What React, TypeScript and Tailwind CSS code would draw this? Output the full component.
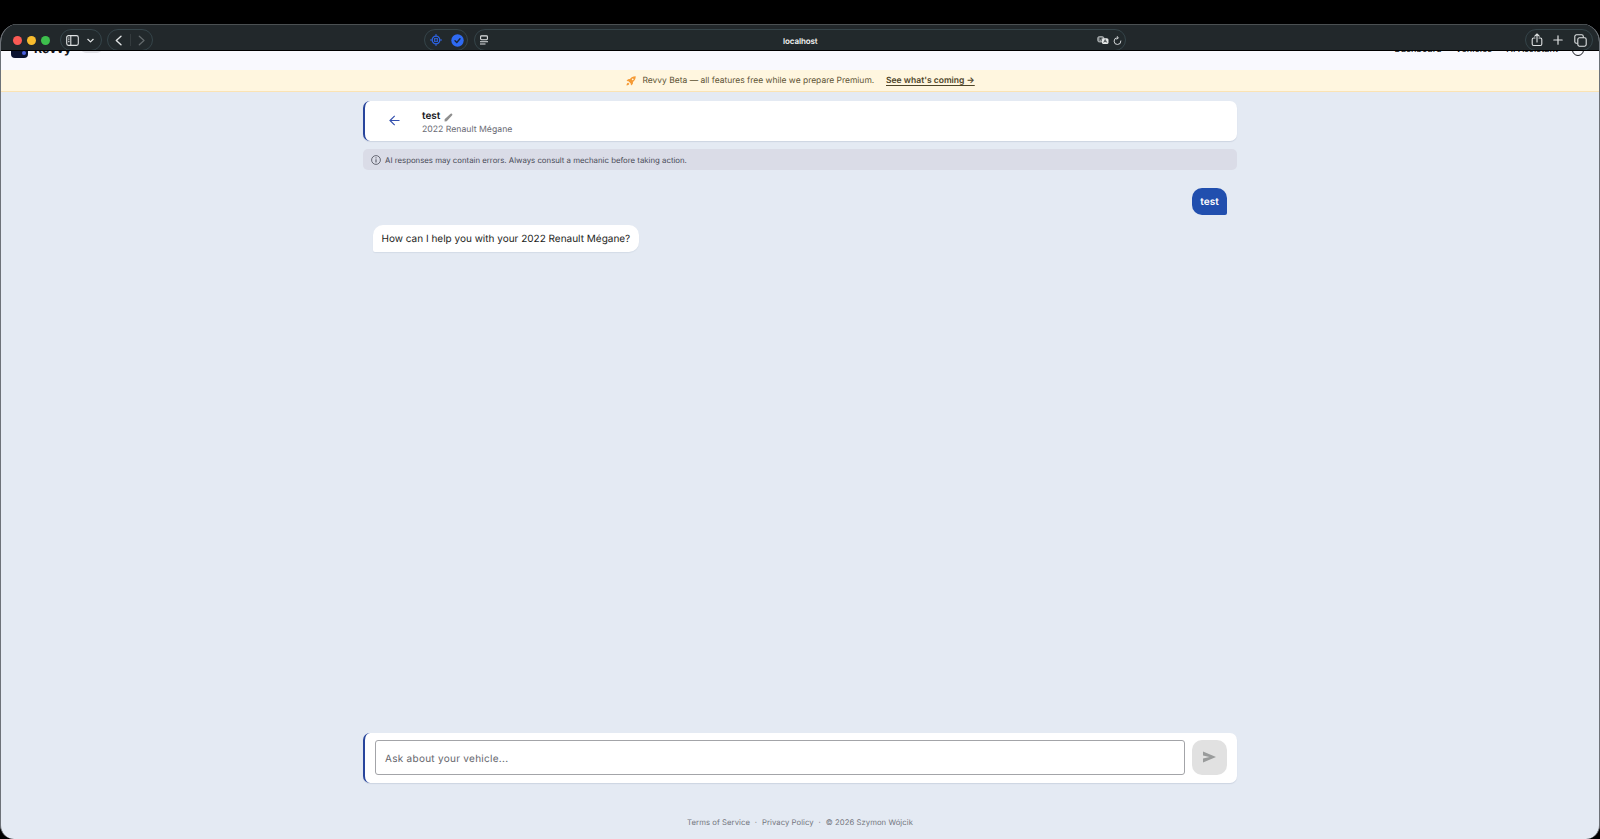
import type { ReactNode } from "react";

const pill =
  "flex h-[22px] shrink-0 items-center rounded-full border border-[#36454a] bg-[#22292c]";

function Toolbar() {
  return (
    <header className="relative flex h-[27px] shrink-0 items-start overflow-hidden border-t border-b border-t-[#4b5052] border-b-black bg-[#22282b] pt-1 text-[#dfe2e3]">
      <div className="mt-[6.5px] ml-[11.5px] flex gap-[5.4px]">
        <span className="size-[9px] rounded-full bg-[#fb5a54]" />
        <span className="size-[9px] rounded-full bg-[#f8bc2e]" />
        <span className="size-[9px] rounded-full bg-[#3dbf4c]" />
      </div>
      <div className={`${pill} ml-[10px] w-[42px] gap-[8px] pl-[5px]`}>
        <svg className="size-[13px]" viewBox="0 0 13 13" fill="none" stroke="currentColor" strokeWidth="1.1">
          <rect x="0.7" y="1.6" width="11.6" height="9.8" rx="1.8" />
          <path d="M4.8 1.6v9.8M2.2 4h1.2M2.2 5.8h1.2M2.2 7.6h1.2" />
        </svg>
        <svg className="size-[7px]" viewBox="0 0 7 7" fill="none" stroke="currentColor" strokeWidth="1.2" strokeLinecap="round" strokeLinejoin="round">
          <path d="M0.8 2.3 3.5 4.9 6.2 2.3" />
        </svg>
      </div>
      <div className={`${pill} ml-[5px] w-[46px] pl-[6px]`}>
        <svg className="h-[11px] w-[9px]" viewBox="0 0 9 11" fill="none" stroke="currentColor" strokeWidth="1.4" strokeLinecap="round" strokeLinejoin="round">
          <path d="M7 1.3 2.3 5.5 7 9.7" />
        </svg>
        <span className="ml-[7px] h-[12px] w-px bg-[#343b3e]" />
        <svg className="ml-[6px] h-[11px] w-[9px] text-[#62686b]" viewBox="0 0 9 11" fill="none" stroke="currentColor" strokeWidth="1.3" strokeLinecap="round" strokeLinejoin="round">
          <path d="M2.3 1.3 7 5.5 2.3 9.7" />
        </svg>
      </div>
      <div className={`${pill} ml-[271px] w-[44px] gap-[9px] pl-[5px]`}>
        <svg className="size-[12px] text-[#2d62e0]" viewBox="0 0 12 12" fill="none" stroke="currentColor">
          <circle cx="6" cy="6" r="3.8" strokeWidth="1.3" />
          <circle cx="6" cy="6" r="1.5" strokeWidth="1.1" />
          <path d="M6 0v3M6 9v3M0 6h3M9 6h3M3.4 3.4l1.4 1.4M7.2 7.2l1.4 1.4M8.6 3.4 7.2 4.8M4.8 7.2 3.4 8.6" strokeWidth="1" />
        </svg>
        <svg className="size-[13px]" viewBox="0 0 13 13">
          <circle cx="6.5" cy="6.5" r="6.2" fill="#2f6af2" />
          <path d="M4 6.7 5.8 8.5 9 4.8" fill="none" stroke="#182434" strokeWidth="1.4" strokeLinecap="round" />
        </svg>
      </div>
      <div className={`${pill} ml-[6px] w-[652px] pl-[4px]`}>
        <svg className="size-[10px]" viewBox="0 0 10 10" fill="none" stroke="currentColor" strokeWidth="1.1">
          <rect x="1.6" y="0.9" width="6.8" height="3.8" rx="0.9" />
          <path d="M1 6.8h8M1 9h5.5" />
        </svg>
        <span className="w-[622px] pt-px text-center text-[8px] leading-[10px] font-semibold tracking-[-0.08px] text-[#f1f2f2]">
          localhost
        </span>
      </div>
      <div className="absolute top-[10.5px] left-[1096px] flex items-center gap-[4px]">
        <svg className="h-[9px] w-[12px]" viewBox="0 0 12 9">
          <rect x="0.7" y="0.6" width="6.2" height="5.4" rx="1.6" fill="#8f9496" stroke="#b5b9ba" strokeWidth="0.8" />
          <path d="M2.2 2.2h3M3.7 1.8 2.5 4.6M3.4 3l1.6 1.5" stroke="#22292c" strokeWidth="0.7" />
          <rect x="5" y="2.2" width="6.5" height="5.8" rx="1.6" fill="#e6e8e8" />
          <path d="M6.7 6.5 8.2 3.6 9.7 6.5M7.3 5.6h1.8" fill="none" stroke="#22292c" strokeWidth="0.7" />
        </svg>
        <svg className="size-[9px]" viewBox="0 0 9 9" fill="none" stroke="#d5d8d9" strokeWidth="1" strokeLinecap="round" strokeLinejoin="round">
          <path d="M4.5 1.7A3.4 3.4 0 1 0 7.9 5M4 .4 5.4 1.7 4 3.2" />
        </svg>
      </div>
      <div className={`${pill} mr-[6px] ml-auto w-[68px] justify-between pr-[5px] pl-[4.5px]`}>
        <svg className="h-[14px] w-[12px]" viewBox="0 0 12 14" fill="none" stroke="currentColor" strokeWidth="1.1" strokeLinecap="round" strokeLinejoin="round">
          <path d="M4 5H2.6A1.4 1.4 0 0 0 1.2 6.4v4.7a1.4 1.4 0 0 0 1.4 1.4h6.8a1.4 1.4 0 0 0 1.4-1.4V6.4A1.4 1.4 0 0 0 9.4 5H8M6 9V1.2M3.8 3.2 6 1l2.2 2.2" />
        </svg>
        <svg className="size-[10px]" viewBox="0 0 10 10" stroke="currentColor" strokeWidth="1.2" strokeLinecap="round">
          <path d="M5 .8v8.4M.8 5h8.4" />
        </svg>
        <svg className="size-[13px]" viewBox="0 0 13 13" fill="none" stroke="currentColor" strokeWidth="1.1">
          <path d="M3.6 9.3H2.4A1.6 1.6 0 0 1 .8 7.7V2.4A1.6 1.6 0 0 1 2.4.8h5.3a1.6 1.6 0 0 1 1.6 1.6v1.2" />
          <rect x="3.8" y="3.8" width="8.4" height="8.4" rx="1.6" />
        </svg>
      </div>
    </header>
  );
}

function NavBar() {
  return (
    <nav className="flex h-[19px] shrink-0 items-start overflow-hidden bg-[#f9f9fe] pr-[15.5px] pl-[10px]">
      <div className="-mt-[10px] flex size-[17px] items-end justify-end rounded-[4px] bg-[#0b1230] pr-[2px] pb-[3px]">
        <span className="size-[4px] rounded-full bg-[#4a60e0]" />
      </div>
      <span className="-mt-[10px] ml-[6px] w-[36px] text-[12.4px] leading-[16px] font-bold text-[#14161c]">Revvy</span>
      <span className="-mt-[10px] ml-[11px] h-[12px] w-[21px] rounded-[5px] bg-[#e0e0e6]" />
      <div className="-mt-[7px] ml-auto flex text-[8.9px] leading-[12px] font-medium tracking-[0.1px] text-[#1c1e24]">
        <span className="w-[61px]">Dashboard</span>
        <span className="w-[51px]">Vehicles</span>
        <span className="w-[65px]">AI Assistant</span>
      </div>
      <span className="-mt-[7px] size-[12px] rounded-full border-[1.4px] border-[#1c1e24]" />
    </nav>
  );
}

function Banner() {
  return (
    <div className="flex h-[22px] shrink-0 items-center border-b border-[#fae3b4] bg-[#fff6df] pl-[625px] text-[8.48px] leading-[12px] whitespace-nowrap text-[#5d5334]">
      <svg className="size-[10px]" viewBox="0 0 10 10">
        <path d="M9.7.3C7.2.2 5.3 1.2 4 3L2 3.2.5 5l2 .3 2.2 2.2.3 2L6.8 8 7 6C8.8 4.7 9.8 2.8 9.7.3Z" fill="#f59a35" />
        <circle cx="6.7" cy="3.3" r=".9" fill="#fff6df" />
        <path d="M.5 9.5C.6 8 1 7 2.2 6.7L3.3 7.8C3 9 2 9.4.5 9.5Z" fill="#f59a35" />
      </svg>
      <span className="ml-[6.5px] w-[243.5px]">Revvy Beta — all features free while we prepare Premium.</span>
      <a className="text-[8.55px] font-semibold text-[#4d4428] underline underline-offset-[1.5px]">See what's coming →</a>
    </div>
  );
}

function Card({ className, children }: { className: string; children: ReactNode }) {
  return (
    <section className={`flex shrink-0 rounded-[7px] border-l-2 border-[#28459c] bg-white shadow-[0_1px_1px_rgba(40,60,100,0.12)] ${className}`}>
      {children}
    </section>
  );
}

function ChatHeader() {
  return (
    <Card className="mt-[9px] h-[40px]">
      <svg className="mt-[14px] ml-[24px] size-[11px]" viewBox="0 0 11 11" fill="none" stroke="#3450ae" strokeWidth="1.2">
        <path d="M10.5 5.5H1.2M5.7.8 1 5.5l4.7 4.7" />
      </svg>
      <div className="ml-[22px] pt-[9px]">
        <div className="flex h-[12px] items-center text-[10px] leading-[12px] font-semibold text-[#15161a]">
          <span>test</span>
          <svg className="mt-[2px] ml-[4px] size-[9px]" viewBox="0 0 9 9" fill="#8f8f8f">
            <path d="M.6 8.5V6.2L6.6.8Q7.3.2 8 .8t.2 1.5L2.7 8.2Z" />
          </svg>
        </div>
        <p className="mt-[2px] text-[8.7px] leading-[12px] text-[#6b6c75]">2022 Renault Mégane</p>
      </div>
    </Card>
  );
}

function Disclaimer() {
  return (
    <div className="mt-[8px] flex h-[21px] shrink-0 items-center rounded-[5px] bg-[#dadce7] pl-[8px] text-[#494b57]">
      <svg className="size-[10px]" viewBox="0 0 10 10" fill="none" stroke="currentColor" strokeWidth=".8">
        <circle cx="5" cy="5" r="4.4" />
        <path d="M5 4.3v3.2M5 2.4v1" strokeWidth="1" />
      </svg>
      <p className="ml-[4px] pt-px text-[7.8px] leading-[10px]">
        AI responses may contain errors. Always consult a mechanic before taking action.
      </p>
    </div>
  );
}

function Composer() {
  return (
    <Card className="mt-auto h-[50px] items-start justify-between pt-[7px] pr-[10px] pl-[9.5px]">
      <div className="flex h-[35px] w-[810.5px] items-center rounded-[3px] border border-[#a3a4a8] bg-white pt-[2px] pl-[9.500px] text-[10px] leading-[14px] tracking-[0.28px] text-[#65666c]">
        Ask about your vehicle...
      </div>
      <button className="flex size-[35px] items-center justify-center rounded-[10px] bg-[#e1e1e1]">
        <svg className="-mt-px h-[12px] w-[13px]" viewBox="0 0 13 12" fill="#999b9b">
          <path d="M0 .5 13 6 0 11.5V7.4L6.5 6 0 4.6Z" />
        </svg>
      </button>
    </Card>
  );
}

export default function App() {
  return (
    <div className="flex h-[839px] w-[1600px] flex-col overflow-hidden bg-black pt-6 font-['Inter',sans-serif] [text-rendering:geometricPrecision]">
      <div className="flex min-h-0 flex-1 flex-col overflow-hidden rounded-t-[18px] rounded-b-[14px] border-x border-[#6d7278] bg-[#e4eaf3]">
        <Toolbar />
        <NavBar />
        <Banner />
        <main className="ml-[362px] flex w-[874px] flex-1 flex-col">
          <ChatHeader />
          <Disclaimer />
          <div className="flex flex-col px-[10px] pt-[17.5px]">
            <p className="flex h-[27.5px] w-[35px] items-center justify-center self-end rounded-[10px] rounded-br-[2px] bg-[#214fae] pt-[2px] text-[10px] leading-[14px] font-semibold text-white">
              test
            </p>
            <p className="mt-[10px] flex h-[27px] w-[266px] items-center rounded-[10px] rounded-bl-[2px] bg-white pt-px pl-[8.5px] text-[10px] whitespace-nowrap text-[#1d1e22] shadow-[0_1px_1px_rgba(40,60,100,0.08)]">
              How can I help you with your 2022 Renault Mégane?
            </p>
          </div>
          <Composer />
        </main>
        <footer className="flex h-[56px] shrink-0 items-start justify-center pt-[34px] text-[7.7px] leading-[11px] tracking-[0.06px] text-[#747780]">
          <span>Terms of Service</span>
          <span className="w-[12px] text-center">·</span>
          <span>Privacy Policy</span>
          <span className="w-[12px] text-center">·</span>
          <span>© 2026 Szymon Wójcik</span>
        </footer>
      </div>
    </div>
  );
}
